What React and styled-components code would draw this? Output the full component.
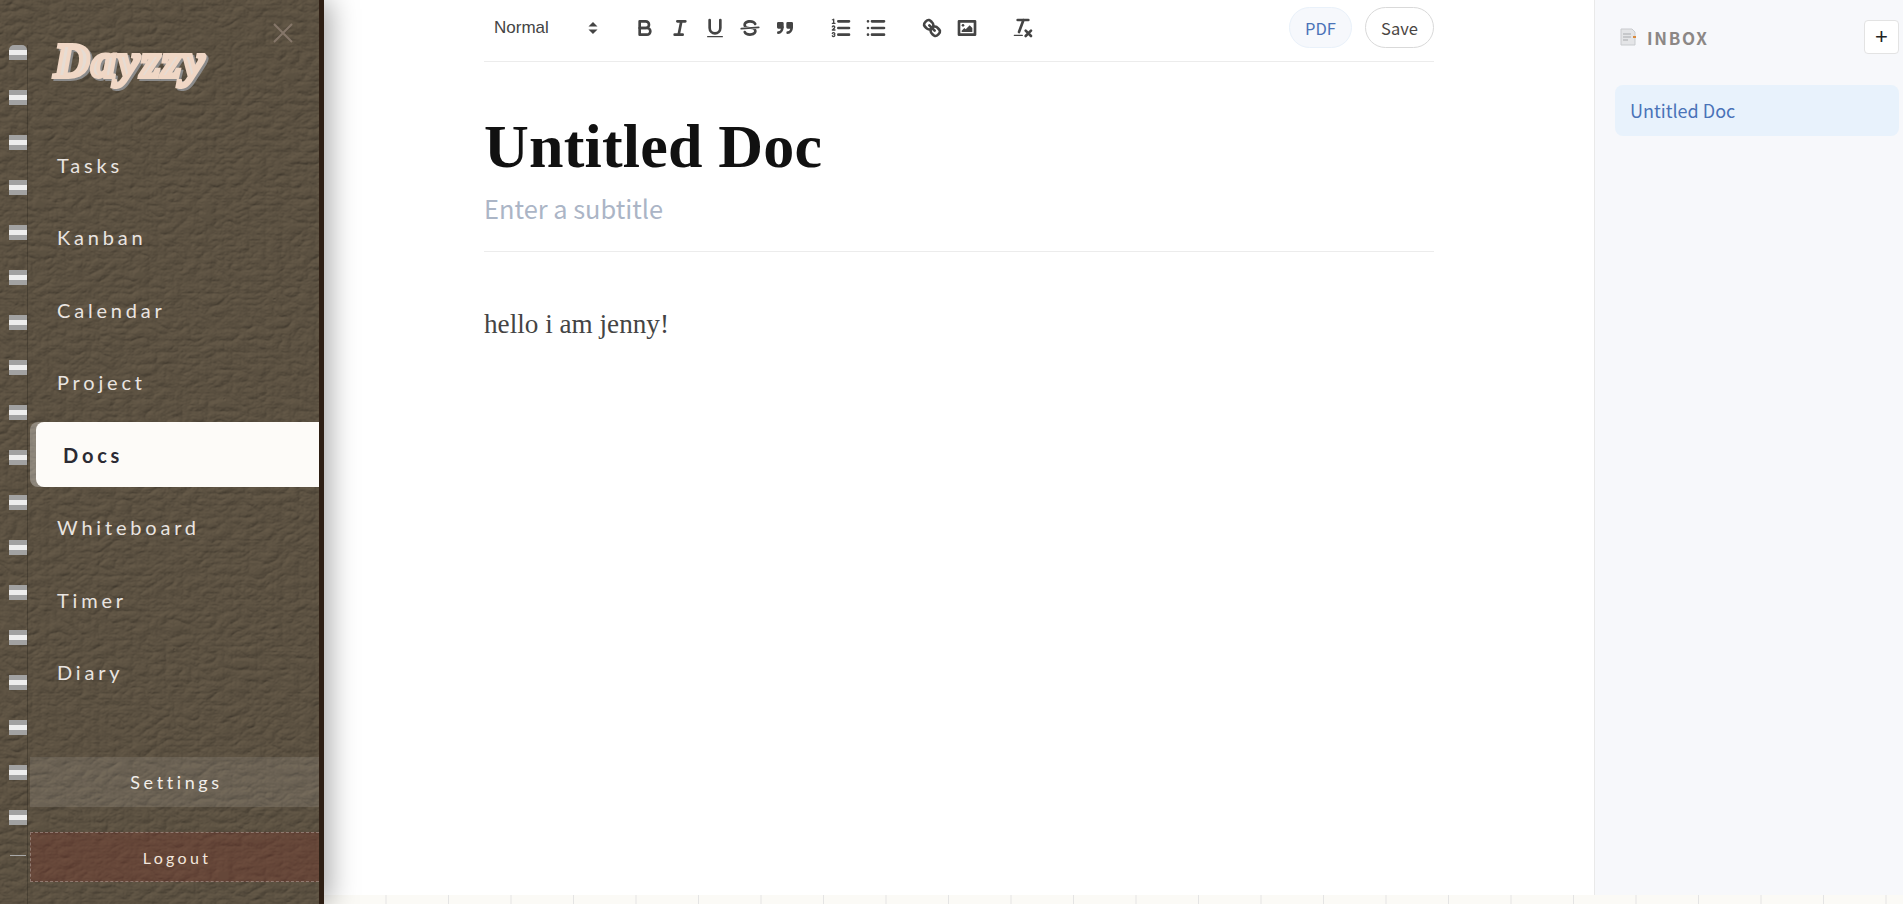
import styled, { createGlobalStyle } from "styled-components";

const leather = `url("data:image/svg+xml,${encodeURIComponent(
  `<svg xmlns='http://www.w3.org/2000/svg' width='340' height='904'><filter id='l' x='0' y='0' width='100%' height='100%' color-interpolation-filters='sRGB'><feTurbulence type='turbulence' baseFrequency='.06 .085' numOctaves='4' seed='11'/><feColorMatrix values='0 0 0 0 0 0 0 0 0 0 0 0 0 0 0 1.6 0 0 0 0'/><feDiffuseLighting surfaceScale='.55' diffuseConstant='1' lighting-color='#695d4b'><feDistantLight azimuth='235' elevation='60'/></feDiffuseLighting></filter><rect width='340' height='904' filter='url(#l)'/></svg>`
)}")`;

const NAV = ["Tasks", "Kanban", "Calendar", "Project", "Docs", "Whiteboard", "Timer", "Diary"];

const GlobalStyle = createGlobalStyle`
  html, body {
    margin: 0;
    height: 100%;
    overflow: hidden;
    background: #fff;
  }
  * { box-sizing: border-box; }
`;

const Page = styled.div`
  display: flex;
  height: 100vh;
`;

const Sidebar = styled.aside`
  position: relative;
  z-index: 2;
  flex: 0 0 324px;
  display: flex;
  flex-direction: column;
  padding: 0 0 22px 30px;
  background: #5a4f40 ${leather};
  border-right: 5px solid #2e1f14;
  box-shadow: 6px 0 26px rgba(0, 0, 0, 0.34);
`;

const RingColumn = styled.div`
  position: absolute;
  top: 45px;
  left: 9px;
  bottom: 0;
  width: 19px;
  display: flex;
  flex-direction: column;
  gap: 30px;
  border-right: 1px solid rgba(30, 25, 20, 0.3);
`;

const Ring = styled.span`
  display: block;
  width: 18px;
  height: 15px;
  border-radius: ${(p) => (p.$first ? "5px 5px 0 0" : "0")};
  background: linear-gradient(#a2a2a2 0 5px, #eeeeee 5px 10px, #a2a2a2 10px);
`;

const RingEnd = styled.span`
  display: block;
  width: 16px;
  height: 1px;
  margin-left: 1px;
  background: #a9a9a9;
`;

const CloseButton = styled.svg`
  position: absolute;
  top: 23px;
  left: 273px;
  width: 20px;
  height: 20px;
  stroke: #857669;
  stroke-width: 2;
`;

const LogoRow = styled.div`
  height: 132px;
  padding: 31px 0 0 24px;
`;

const Logo = styled.div`
  font-family: "Liberation Serif", serif;
  font-style: italic;
  font-weight: 700;
  font-size: 49.5px;
  line-height: 60px;
  letter-spacing: 1.5px;
  color: #e6dcd3;
  -webkit-text-stroke: 4px #f0d7c5;
  filter: drop-shadow(2px 2px 0 #8b8b8b);
`;

const NavList = styled.nav`
  display: flex;
  flex-direction: column;
  gap: 7.5px;
`;

const NavItem = styled.a`
  display: flex;
  align-items: center;
  height: 65px;
  padding-left: 27px;
  margin-left: ${(p) => (p.$active ? "6px" : "0")};
  font-family: Lato, sans-serif;
  font-size: 20px;
  font-weight: ${(p) => (p.$active ? 700 : 400)};
  letter-spacing: 3.8px;
  color: ${(p) => (p.$active ? "#2b2a33" : "#e9e4e0")};
  background: ${(p) => (p.$active ? "#fdfbf8" : "transparent")};
  border-radius: ${(p) => (p.$active ? "8px 0 0 8px" : "0")};
  box-shadow: ${(p) => (p.$active ? "-6px 0 0 rgba(255, 255, 255, 0.3)" : "none")};
`;

const FooterActions = styled.div`
  margin-top: auto;
  display: flex;
  flex-direction: column;
  gap: 25px;
`;

const SettingsButton = styled.button`
  height: 50px;
  border: 0;
  padding-left: 10px;
  background: rgba(255, 255, 255, 0.1);
  color: #f2eeea;
  font-family: Lato, sans-serif;
  font-size: 18px;
  letter-spacing: 3.6px;
`;

const LogoutButton = styled.button`
  height: 50px;
  border: 1px dashed rgba(255, 255, 255, 0.28);
  border-right: 0;
  padding-left: 10px;
  background: rgba(125, 50, 40, 0.32);
  color: #f2e6dc;
  font-family: Lato, sans-serif;
  font-size: 16px;
  letter-spacing: 3.3px;
`;

const Main = styled.div`
  flex: 1;
  min-width: 0;
  display: flex;
  flex-direction: column;
`;

const Workspace = styled.div`
  flex: 1;
  display: flex;
  min-height: 0;
`;

const RuledStrip = styled.div`
  flex: 0 0 9px;
  background-color: #fbfaf6;
  background-image: linear-gradient(to right, transparent 62px, #e4e4e4 62px);
  background-size: 62.5px 100%;
`;

const EditorColumn = styled.main`
  flex: 1;
  padding-left: 160px;
  padding-right: 160px;
  min-width: 0;
`;

const Toolbar = styled.div`
  display: flex;
  align-items: center;
  height: 62px;
  padding-bottom: 6px;
  border-bottom: 1px solid #ececec;
`;

const HeaderPicker = styled.div`
  display: flex;
  align-items: center;
  width: 149px;
  padding-left: 10px;
  font-family: "Liberation Sans", sans-serif;
  font-size: 17px;
  color: #444;
`;

const PickerArrows = styled.svg`
  width: 22px;
  height: 22px;
  margin-left: 33px;
  fill: #444;
  stroke: #444;
  stroke-width: 1.4;
`;

const ToolGroup = styled.div`
  display: flex;
  gap: 11px;
  margin-right: ${(p) => p.$gap || 0}px;
`;

const Icon = styled.svg`
  width: 24px;
  height: 24px;
  fill: none;
  stroke: #444;
  stroke-width: 2;
  stroke-linecap: round;
  stroke-linejoin: round;

  .fill {
    fill: #444;
    stroke: none;
  }
  .solid {
    fill: #444;
  }
  .thin {
    stroke-width: 1;
  }
  .bar {
    stroke-width: 1.4;
  }
`;

const ToolbarActions = styled.div`
  margin-left: auto;
  display: flex;
  gap: 13px;
`;

const PillButton = styled.button`
  height: 41px;
  width: ${(p) => p.$width}px;
  border-radius: 21px;
  border: 1px solid ${(p) => (p.$primary ? "#e9f1fa" : "#d9d9d9")};
  background: ${(p) => (p.$primary ? "#f6f8fc" : "#fff")};
  color: ${(p) => (p.$primary ? "#4a73b8" : "#4a4543")};
  font-family: "Noto Sans CJK KR", "Noto Sans", sans-serif;
  font-size: 16.5px;
  padding: 0;
`;

const TitleBlock = styled.header`
  padding-top: 49px;
  height: 190px;
  border-bottom: 1px solid #ececec;
`;

const Title = styled.h1`
  margin: 0;
  font-family: "Liberation Serif", serif;
  font-weight: 700;
  font-size: 62px;
  line-height: 70px;
  letter-spacing: 0.2px;
  color: #111;
`;

const Subtitle = styled.p`
  margin: 7px 0 0;
  font-family: "Noto Sans CJK KR", "Noto Sans", sans-serif;
  font-size: 25.4px;
  line-height: 40px;
  color: #abb5c6;
`;

const Body = styled.p`
  margin: 52px 0 0;
  font-family: "Liberation Serif", serif;
  font-size: 27.2px;
  line-height: 40px;
  color: #444;
`;

const DocsPanel = styled.aside`
  flex: 0 0 309px;
  background: #f7f8fb;
  border-left: 1px solid #e9e9e9;
  padding: 20px 4px 0 20px;
`;

const PanelHeader = styled.div`
  display: flex;
  align-items: center;
  height: 34px;
`;

const FolderIcon = styled.svg`
  width: 16px;
  height: 18px;
  margin-left: 5px;
`;

const FolderName = styled.span`
  margin-left: 11px;
  font-family: "Noto Sans CJK KR", "Noto Sans", sans-serif;
  font-weight: 700;
  font-size: 17px;
  letter-spacing: 1.7px;
  color: #8c8785;
`;

const AddButton = styled.button`
  margin-left: auto;
  width: 35px;
  height: 34px;
  padding: 0;
  background: #fff;
  border: 1px solid #e3e3e3;
  border-radius: 4px;
  font-family: "Liberation Sans", sans-serif;
  font-size: 22px;
  color: #222;
`;

const DocItem = styled.div`
  margin-top: 31px;
  height: 51px;
  display: flex;
  align-items: center;
  padding-left: 15px;
  padding-bottom: 2px;
  border-radius: 8px;
  background: #e8f2fc;
  font-family: "Noto Sans CJK KR", "Noto Sans", sans-serif;
  font-size: 18px;
  color: #4a73b8;
`;

function App() {
  return (
    <Page>
      <GlobalStyle />
      <Sidebar>
        <RingColumn>
          {Array.from({ length: 18 }, (_, i) => (
            <Ring key={i} $first={i === 0} />
          ))}
          <RingEnd />
        </RingColumn>
        <CloseButton viewBox="0 0 20 20">
          <path d="M1 1l18 18M19 1L1 19" />
        </CloseButton>
        <LogoRow>
          <Logo>Dayzzy</Logo>
        </LogoRow>
        <NavList>
          {NAV.map((name) => (
            <NavItem key={name} $active={name === "Docs"}>
              {name}
            </NavItem>
          ))}
        </NavList>
        <FooterActions>
          <SettingsButton>Settings</SettingsButton>
          <LogoutButton>Logout</LogoutButton>
        </FooterActions>
      </Sidebar>

      <Main>
        <Workspace>
          <EditorColumn>
            <Toolbar>
              <HeaderPicker>
                Normal
                <PickerArrows viewBox="0 0 18 18">
                  <polygon points="7 11 9 13 11 11 7 11" />
                  <polygon points="7 7 9 5 11 7 7 7" />
                </PickerArrows>
              </HeaderPicker>
              <ToolGroup $gap={32}>
                <Icon viewBox="0 0 18 18">
                  <path d="M5,4H9.5A2.5,2.5,0,0,1,12,6.5v0A2.5,2.5,0,0,1,9.5,9H5V4Z" />
                  <path d="M5,9h5.5A2.5,2.5,0,0,1,13,11.5v0A2.5,2.5,0,0,1,10.5,14H5V9Z" />
                </Icon>
                <Icon viewBox="0 0 18 18">
                  <path d="M7,4H13M5,14H11M8,14L10,4" />
                </Icon>
                <Icon viewBox="0 0 18 18">
                  <path d="M5,3V9a4.012,4.012,0,0,0,4,4H9a4.012,4.012,0,0,0,4-4V3" />
                  <rect className="fill" height="1" rx="0.5" width="12" x="3" y="15" />
                </Icon>
                <Icon viewBox="0 0 18 18">
                  <line className="bar" x1="15.5" x2="2.5" y1="8.5" y2="9.5" />
                  <path className="fill" d="M9.007,8C6.542,7.791,6,7.519,6,6.5,6,5.792,7.283,5,9,5c1.571,0,2.765.679,2.969,1.309a1,1,0,0,0,1.9-.617C13.356,4.106,11.354,3,9,3,6.2,3,4,4.538,4,6.5a3.2,3.2,0,0,0,.5,1.843Z" />
                  <path className="fill" d="M8.984,10C11.457,10.208,12,10.479,12,11.5c0,.708-1.283,1.5-3,1.5-1.571,0-2.765-.679-2.969-1.309a1,1,0,0,0-1.9.617C4.644,13.894,6.646,15,9,15c2.8,0,5-1.538,5-3.5a3.2,3.2,0,0,0-.5-1.843Z" />
                </Icon>
                <Icon viewBox="0 0 18 18">
                  <rect className="solid" height="3" width="3" x="4" y="5.5" />
                  <rect className="solid" height="3" width="3" x="11" y="5.5" />
                  <path d="M7,8.5c0,2.5-1.5,4-3,4" />
                  <path d="M14,8.5c0,2.5-1.5,4-3,4" />
                </Icon>
              </ToolGroup>
              <ToolGroup $gap={32}>
                <Icon viewBox="0 0 18 18">
                  <path d="M7,4H15M7,9H15M7,14H15" />
                  <line className="thin" x1="2.5" x2="4.5" y1="5.5" y2="5.5" />
                  <path className="fill" d="M3.5,6A0.5,0.5,0,0,1,3,5.5V3.085l-0.276.138A0.5,0.5,0,0,1,2.053,3c-0.124-.247-0.023-0.324.224-0.447l1-.5A0.5,0.5,0,0,1,4,2.5v3A0.5,0.5,0,0,1,3.5,6Z" />
                  <path className="thin" d="M4.5,10.5h-2c0-.234,1.85-1.076,1.85-2.234A0.959,0.959,0,0,0,2.5,8.156" />
                  <path className="thin" d="M2.5,14.846a0.959,0.959,0,0,0,1.85-.109A0.7,0.7,0,0,0,3.75,14a0.688,0.688,0,0,0,.6-0.736,0.959,0.959,0,0,0-1.85-.109" />
                </Icon>
                <Icon viewBox="0 0 18 18">
                  <path d="M6,4H15M6,9H15M6,14H15M3,4H3M3,9H3M3,14H3" />
                </Icon>
              </ToolGroup>
              <ToolGroup $gap={32}>
                <Icon viewBox="0 0 18 18">
                  <line x1="7" x2="11" y1="7" y2="11" />
                  <path d="M8.9,4.577a3.476,3.476,0,0,1,.36,4.679A3.476,3.476,0,0,1,4.577,8.9C3.185,7.5,2.035,6.4,4.217,4.217S7.5,3.185,8.9,4.577Z" />
                  <path d="M13.423,9.1a3.476,3.476,0,0,0-4.679-.36,3.476,3.476,0,0,0,.36,4.679c1.392,1.392,2.5,2.542,4.679.36S14.815,10.5,13.423,9.1Z" />
                </Icon>
                <Icon viewBox="0 0 18 18">
                  <rect height="10" width="12" x="3" y="4" />
                  <circle className="fill" cx="6" cy="7" r="1" />
                  <polygon className="fill" points="5 12 5 11 7 9 8 10 11 7 13 9 13 12 5 12" />
                </Icon>
              </ToolGroup>
              <ToolGroup>
                <Icon viewBox="0 0 18 18">
                  <path d="M5,3H13M6,12L9.35,3M11,11L15,15M15,11L11,15" />
                  <rect className="fill" height="1" rx="0.5" width="7" x="2" y="14" />
                </Icon>
              </ToolGroup>
              <ToolbarActions>
                <PillButton $primary $width={63}>PDF</PillButton>
                <PillButton $width={69}>Save</PillButton>
              </ToolbarActions>
            </Toolbar>
            <TitleBlock>
              <Title>Untitled Doc</Title>
              <Subtitle>Enter a subtitle</Subtitle>
            </TitleBlock>
            <Body>hello i am jenny!</Body>
          </EditorColumn>

          <DocsPanel>
            <PanelHeader>
              <FolderIcon viewBox="0 0 16 18">
                <path d="M1 1h11l3 3v13H1z" fill="#e4e5e7" stroke="#c9cbce" />
                <path d="M3 6h8M3 9h8M3 12h5" stroke="#a9abae" />
                <rect x="13" y="8" width="3" height="2" fill="#d98a3d" />
              </FolderIcon>
              <FolderName>INBOX</FolderName>
              <AddButton>+</AddButton>
            </PanelHeader>
            <DocItem>Untitled Doc</DocItem>
          </DocsPanel>
        </Workspace>
        <RuledStrip />
      </Main>
    </Page>
  );
}

export default App;
